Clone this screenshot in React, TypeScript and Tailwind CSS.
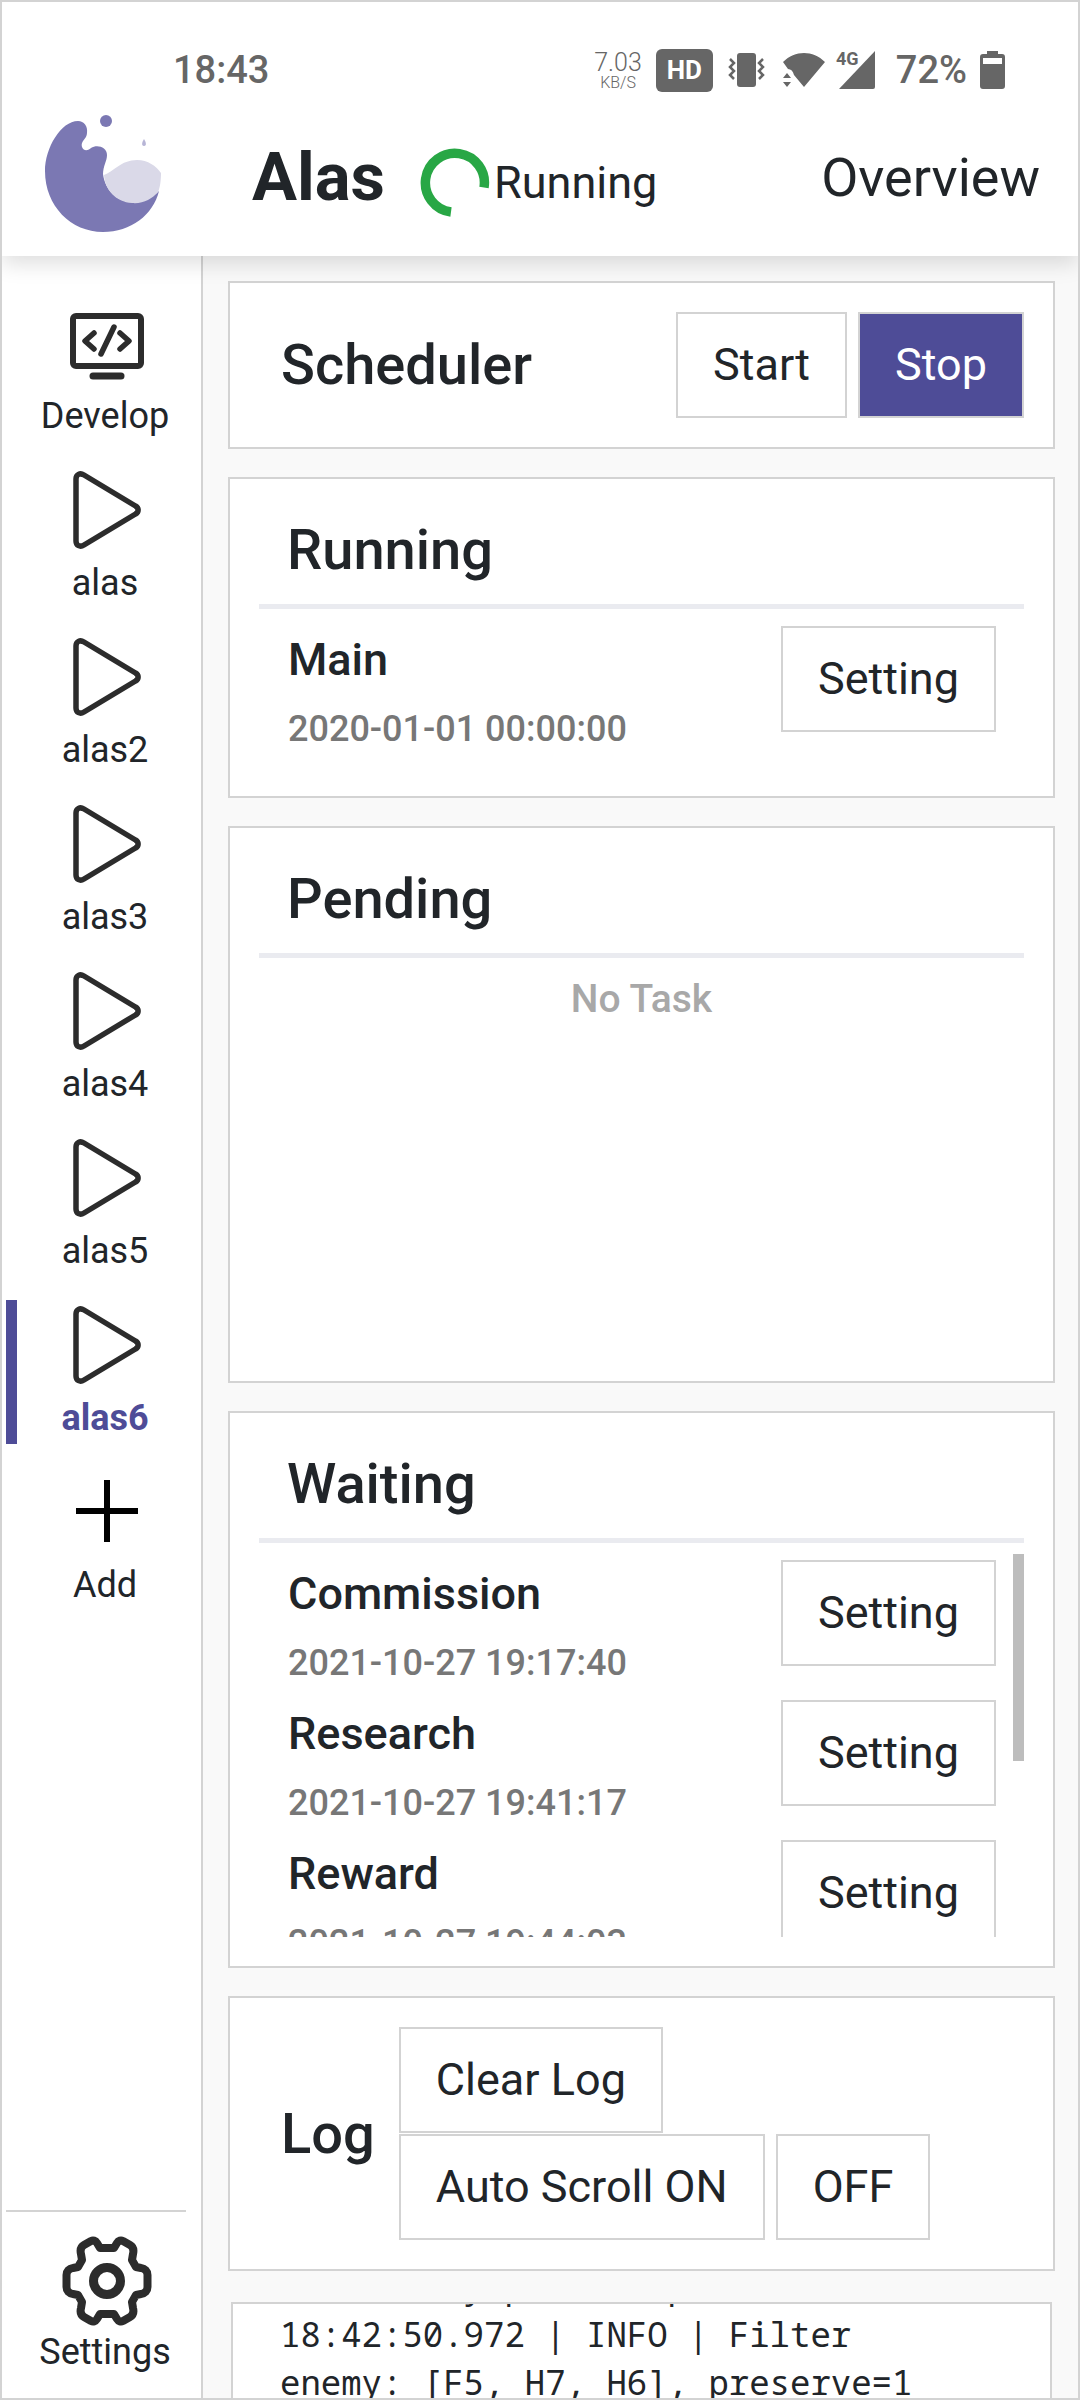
import React from "react";

const instances = ["alas", "alas2", "alas3", "alas4", "alas5", "alas6"];

const waitingTasks = [
  { name: "Commission", time: "2021-10-27 19:17:40" },
  { name: "Research", time: "2021-10-27 19:41:17" },
  { name: "Reward", time: "2021-10-27 19:44:03" },
];

const logLines = [
  "find enemy path skip",
  "18:42:50.972 | INFO | Filter",
  "enemy: [F5, H7, H6], preserve=1",
];

function Logo() {
  return (
    <svg className="mb-1" width="116" height="118" viewBox="0 0 116 118" aria-label="Alas logo">
      <path
        d="M33 7C39 7 43 12 42 19C42 25 35 27 37 33C39 38 44 36 46 34C52 30 62 33 62 41C62 47 58 52 58 60C60 76 72 88 87 88C98 88 108 83 114 77C108 101 86 118 58 118C26 118 0 92 0 57C0 34 16 7 33 7Z"
        fill="#7b78b3"
      />
      <path
        d="M59 61C68 58 76 46 92 46C103 46 111 52 116 59C116 66 115 74 113 78C107 85 98 90 87 89C71 88 60 76 59 61Z"
        fill="#dad9e8"
      />
      <circle cx="61" cy="7" r="6" fill="#7b78b3" />
      <path d="M99 25C101 28 102 32 99 32C96 32 97 28 99 25Z" fill="#b7b5d6" />
    </svg>
  );
}

function DevelopIcon() {
  return (
    <svg width="88" height="88" viewBox="0 0 88 88" fill="none" stroke="#2c2c2c" aria-hidden>
      <rect x="10" y="18" width="68" height="50" rx="3" strokeWidth="6" />
      <path
        d="M31 35L22 43L31 51M57 35L66 43L57 51M51 29L38 56"
        strokeWidth="5.5"
        strokeLinecap="round"
        strokeLinejoin="round"
      />
      <path d="M30 78H58" strokeWidth="7" strokeLinecap="round" />
    </svg>
  );
}

function PlayIcon() {
  return (
    <svg width="88" height="88" viewBox="0 0 88 88" fill="none" stroke="#2c2c2c" aria-hidden>
      <path
        d="M13 14V76C13 80.500 17 82.500 21 80L72.500 49C76 47 76 43 72.500 41L21 10C17 7.500 13 9.500 13 14Z"
        strokeWidth="5.5"
      />
    </svg>
  );
}

function AddIcon() {
  return (
    <svg width="88" height="88" viewBox="0 0 88 88" fill="none" stroke="#000" aria-hidden>
      <path d="M44 13V75M13 44H75" strokeWidth="6" />
    </svg>
  );
}

function GearIcon() {
  return (
    <svg className="-mb-1" width="90" height="90" viewBox="0 0 90 90" fill="none" stroke="#2c2c2c" aria-hidden>
      <path
        d="M38 12H52L55 7C56.500 4.500 59 4 61 5L68 9C71.500 11 72 14 71 18L70 24L74 31L79 32C83 32.500 85.500 35 85.500 39V51C85.500 55 83 57.500 79 58L74 59L70 66L71 72C72 76 71.500 79 68 81L61 85C59 86 56.500 85.500 55 83L52 78H38L35 83C33.500 85.500 31 86 29 85L22 81C18.500 79 18 76 19 72L20 66L16 59L11 58C7 57.500 4.500 55 4.500 51V39C4.500 35 7 32.500 11 32L16 31L20 24L19 18C18 14 18.500 11 22 9L29 5C31 4 33.500 4.500 35 7Z"
        strokeWidth="8"
        strokeLinejoin="round"
      />
      <circle cx="45" cy="45" r="13.5" strokeWidth="9" />
    </svg>
  );
}

function StatusBar() {
  return (
    <div className="mt-11 flex h-12 items-center pl-[171px] pr-[73px] text-[38px] font-medium text-[#666]">
      <span className="flex-1">18:43</span>
      <div className="mr-[14px] text-center font-light">
        <div className="text-[25px] leading-[25px]">7.03</div>
        <div className="text-[16px] leading-[16px]">KB/S</div>
      </div>
      <div className="mr-[15px] flex h-[43px] w-[57px] items-center justify-center rounded-md bg-[#666] text-[26px] font-bold text-white">
        HD
      </div>
      <svg className="mr-[18px]" width="37" height="36" viewBox="0 0 37 36" aria-hidden>
        <rect x="9" y="1" width="19" height="34" rx="3" fill="#666" />
        <path
          d="M2 7L6 11L2 15L6 19L2 23L6 27M35 7L31 11L35 15L31 19L35 23L31 27"
          fill="none"
          stroke="#666"
          strokeWidth="2.5"
        />
      </svg>
      <svg className="mr-[11px]" width="42" height="36" viewBox="0 0 42 36" aria-hidden>
        <path d="M0 10C12 -2 30 -2 42 10L21 35L11 23C10 19 8 17 5 17Z" fill="#666" />
        <path d="M0 26L4 21L8 26ZM0 30L4 35L8 30Z" fill="#666" />
      </svg>
      <svg
        className="mr-[20px] overflow-visible"
        width="40"
        height="38"
        viewBox="0 0 40 38"
        fill="#666"
        aria-hidden
      >
        <path d="M39 0V36Q39 38 37 38H3Z" />
        <text x="0" y="14" fontSize="18" fontWeight="700">
          4G
        </text>
      </svg>
      <span className="mr-[13px]">72%</span>
      <svg width="25" height="38" viewBox="0 0 25 38" aria-hidden>
        <path
          d="M7 0H18V3H22Q25 3 25 6V35Q25 38 22 38H3Q0 38 0 35V6Q0 3 3 3H7ZM3 7V13H22V7Z"
          fill="#666"
          fillRule="evenodd"
        />
      </svg>
    </div>
  );
}

function Header() {
  return (
    <header className="z-10 flex h-[254px] shrink-0 flex-col bg-white shadow-[0_8px_20px_rgba(0,0,0,0.13)]">
      <StatusBar />
      <div className="flex flex-1 items-center pl-[43px] pr-[38px]">
        <Logo />
        <h1 className="ml-[91px] mt-1 text-[67px] font-bold">Alas</h1>
        <svg className="ml-[35px] mt-4" width="70" height="70" viewBox="0 0 70 70" aria-hidden>
          <path
            d="M64 39.500A29.500 29.500 0 1 0 31 64"
            fill="none"
            stroke="#28a745"
            strokeWidth="9.5"
          />
        </svg>
        <span className="ml-1 mt-4 flex-1 text-[45px]">Running</span>
        <span className="mt-1 text-[54px]">Overview</span>
      </div>
    </header>
  );
}

function NavItem({
  label,
  icon,
  active = false,
}: {
  label: string;
  icon: React.ReactNode;
  active?: boolean;
}) {
  return (
    <button
      className={`flex w-full border-l-[11px] pr-1 ${
        active ? "border-[#4e4c97] font-bold text-[#4e4c97]" : "border-transparent"
      }`}
    >
      <span className="flex flex-1 flex-col items-center">
        {icon}
        <span className="-mb-0.5 pr-1 pt-0.5 text-[36px] leading-[56px]">
          {label}
        </span>
      </span>
    </button>
  );
}

function Sidebar() {
  return (
    <aside className="flex w-[201px] shrink-0 flex-col border-r-2 border-[#d3d3d3] bg-white pl-1">
      <nav className="flex flex-1 flex-col gap-[23px] pt-[42px]">
        <NavItem label="Develop" icon={<DevelopIcon />} />
        {instances.map((name) => (
          <NavItem
            key={name}
            label={name}
            icon={<PlayIcon />}
            active={name === "alas6"}
          />
        ))}
        <NavItem label="Add" icon={<AddIcon />} />
      </nav>
      <div className="mr-[15px] border-t-2 border-[#d3d3d3]" />
      <div className="pb-5 pt-6">
        <NavItem label="Settings" icon={<GearIcon />} />
      </div>
    </aside>
  );
}

function Button({
  children,
  primary = false,
}: {
  children: React.ReactNode;
  primary?: boolean;
}) {
  return (
    <button
      className={`h-[106px] shrink-0 border-2 border-[#d3d3d3] px-[35px] text-[45px] ${
        primary ? "bg-[#4e4c97] text-white" : "bg-white"
      }`}
    >
      {children}
    </button>
  );
}

function Card({
  title,
  className = "",
  children,
}: {
  title: string;
  className?: string;
  children: React.ReactNode;
}) {
  return (
    <section
      className={`flex shrink-0 flex-col border-2 border-[#d3d3d3] bg-white p-[29px] ${className}`}
    >
      <h2 className="mb-3 pl-7 text-[56px] font-medium leading-[84px]">
        {title}
      </h2>
      <div className="mb-[11px] h-[5px] shrink-0 bg-[#eaebf0]" />
      {children}
    </section>
  );
}

function TaskRow({ name, time }: { name: string; time: string }) {
  return (
    <li className="flex h-[140px] shrink-0 items-start justify-between pl-[29px] pt-[6px] font-medium">
      <div>
        <div className="text-[45px] leading-[68px]">{name}</div>
        <div className="text-[36px] leading-[70px] text-[#777]">{time}</div>
      </div>
      <div className="flex font-normal">
        <Button>Setting</Button>
      </div>
    </li>
  );
}

export default function App() {
  return (
    <div className="flex h-screen flex-col overflow-hidden border-2 border-[#d3d3d3] bg-[#f9f9f9] font-['Roboto',sans-serif] text-[#212529]">
      <Header />
      <div className="flex min-h-0 flex-1">
        <Sidebar />
        <main className="flex min-w-0 flex-1 flex-col gap-7 overflow-hidden pl-[25px] pr-[23px] pt-[25px]">
          <section className="flex shrink-0 items-center gap-[11px] border-2 border-[#d3d3d3] bg-white p-[29px]">
            <h2 className="flex-1 pl-[22px] text-[56px] font-medium">
              Scheduler
            </h2>
            <Button>Start</Button>
            <Button primary>Stop</Button>
          </section>

          <Card title="Running" className="h-[321px]">
            <ul className="pr-7">
              <TaskRow name="Main" time="2020-01-01 00:00:00" />
            </ul>
          </Card>

          <Card title="Pending" className="h-[557px]">
            <p className="text-center text-[39px] font-medium leading-[60px] text-[#a8a8a8]">
              No Task
            </p>
          </Card>

          <Card title="Waiting" className="h-[557px]">
            <div className="flex min-h-0 flex-1 overflow-hidden">
              <ul className="flex-1 pr-[17px]">
                {waitingTasks.map((task) => (
                  <TaskRow key={task.name} name={task.name} time={task.time} />
                ))}
              </ul>
              <div className="h-[207px] w-[11px] bg-[#bdbdbd]" />
            </div>
          </Card>

          <section className="flex shrink-0 items-center border-2 border-[#d3d3d3] bg-white p-[29px]">
            <h2 className="pl-[22px] pr-[24px] text-[56px] font-medium">Log</h2>
            <div className="flex flex-1 flex-wrap gap-x-[11px] gap-y-px">
              <div className="flex w-full">
                <Button>Clear Log</Button>
              </div>
              <Button>Auto Scroll ON</Button>
              <Button>OFF</Button>
            </div>
          </section>

          <section className="mx-[3px] mt-[3px] min-h-0 flex-1 overflow-hidden border-2 border-b-0 border-[#d3d3d3] bg-white pl-[47px]">
            <pre className="-mt-[42px] font-['Droid_Sans_Mono','Noto_Sans_Mono','DejaVu_Sans_Mono',monospace] text-[34px] leading-[48px]">
              {logLines.join("\n")}
            </pre>
          </section>
        </main>
      </div>
    </div>
  );
}
